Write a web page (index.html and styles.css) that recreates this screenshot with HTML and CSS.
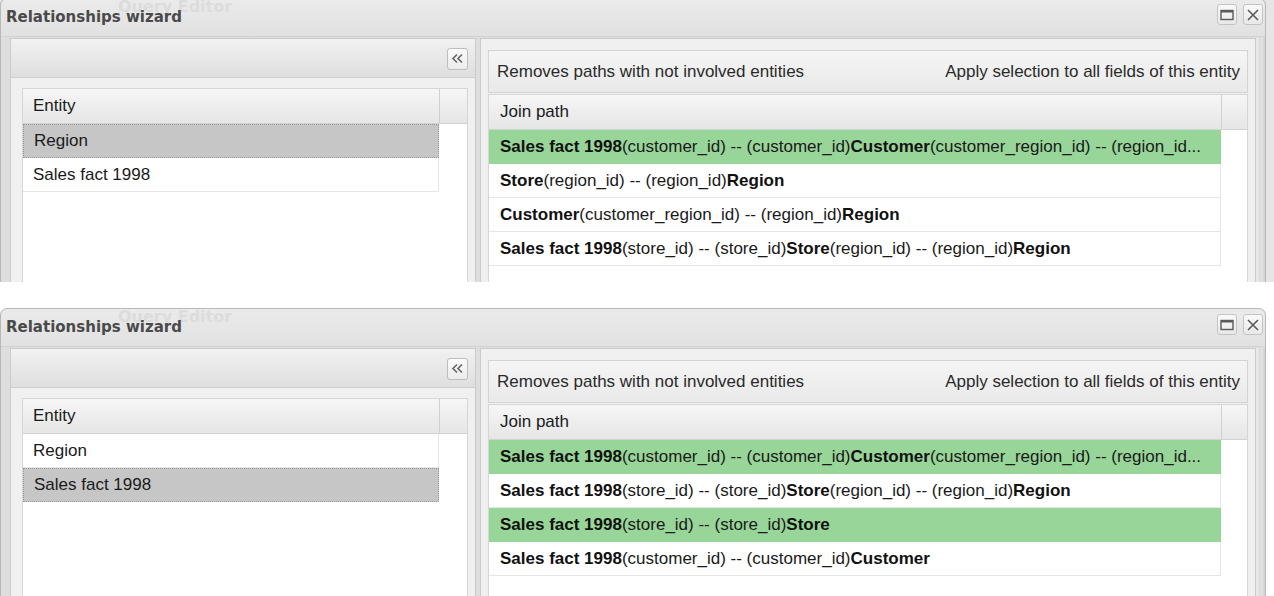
FILE: index.html
```html
<!DOCTYPE html>
<html>
<head>
<meta charset="utf-8">
<title>Relationships wizard</title>
<link rel="stylesheet" href="styles.css">
</head>
<body>
<div class="shot shot-a">
  <div class="window">
    <div class="titlebar">
      <span class="ghost ghost-title">Query Editor</span>
      <span class="title">Relationships wizard</span>
      <div class="tools">
        <span class="tbtn"><svg width="14" height="12" viewBox="0 0 14 12"><rect x="1" y="1.5" width="12" height="9" fill="none" stroke="#5a5a5a" stroke-width="1.4"/><rect x="1" y="1" width="12" height="2.5" fill="#5a5a5a"/></svg></span>
        <span class="tbtn"><svg width="14" height="14" viewBox="0 0 14 14"><path d="M2 2 L12 12 M12 2 L2 12" stroke="#5a5a5a" stroke-width="1.6" fill="none"/></svg></span>
      </div>
    </div>
    <div class="body">
      <div class="lpanel">
        <div class="lhead">
          <span class="collapse"><svg width="13" height="11" viewBox="0 0 13 11"><path d="M6 1.5 L2 5.5 L6 9.5 M11 1.5 L7 5.5 L11 9.5" stroke="#6a6a6a" stroke-width="1.7" fill="none"/></svg></span>
        </div>
        <div class="lcontent">
          <div class="grid lgrid">
            <div class="ghead"><div class="gcol">Entity</div><div class="gspacer"></div></div>
            <div class="grow sel">Region</div>
            <div class="grow">Sales fact 1998</div>
          </div>
        </div>
      </div>
      <div class="rpanel">
        <div class="rtool">
          <span>Removes paths with not involved entities</span>
          <span>Apply selection to all fields of this entity</span>
        </div>
        <div class="grid rgrid">
          <div class="ghead"><div class="gcol">Join path</div><div class="gspacer"></div></div>
          <div class="grow green"><b>Sales fact 1998</b>(customer_id) -- (customer_id)<b>Customer</b>(customer_region_id) -- (region_id...</div>
          <div class="grow"><b>Store</b>(region_id) -- (region_id)<b>Region</b></div>
          <div class="grow"><b>Customer</b>(customer_region_id) -- (region_id)<b>Region</b></div>
          <div class="grow"><b>Sales fact 1998</b>(store_id) -- (store_id)<b>Store</b>(region_id) -- (region_id)<b>Region</b></div>
        </div>
      </div>
      <div class="redge"></div>
    </div>
  </div>
</div>

<div class="shot shot-b">
  <div class="window">
    <div class="titlebar">
      <span class="ghost ghost-title">Query Editor</span>
      <span class="title">Relationships wizard</span>
      <div class="tools">
        <span class="tbtn"><svg width="14" height="12" viewBox="0 0 14 12"><rect x="1" y="1.5" width="12" height="9" fill="none" stroke="#5a5a5a" stroke-width="1.4"/><rect x="1" y="1" width="12" height="2.5" fill="#5a5a5a"/></svg></span>
        <span class="tbtn"><svg width="14" height="14" viewBox="0 0 14 14"><path d="M2 2 L12 12 M12 2 L2 12" stroke="#5a5a5a" stroke-width="1.6" fill="none"/></svg></span>
      </div>
    </div>
    <div class="body">
      <div class="lpanel">
        <div class="lhead">
          <span class="collapse"><svg width="13" height="11" viewBox="0 0 13 11"><path d="M6 1.5 L2 5.5 L6 9.5 M11 1.5 L7 5.5 L11 9.5" stroke="#6a6a6a" stroke-width="1.7" fill="none"/></svg></span>
        </div>
        <div class="lcontent">
          <div class="grid lgrid">
            <div class="ghead"><div class="gcol">Entity</div><div class="gspacer"></div></div>
            <div class="grow">Region</div>
            <div class="grow sel">Sales fact 1998</div>
          </div>
        </div>
      </div>
      <div class="rpanel">
        <div class="rtool">
          <span>Removes paths with not involved entities</span>
          <span>Apply selection to all fields of this entity</span>
        </div>
        <div class="grid rgrid">
          <div class="ghead"><div class="gcol">Join path</div><div class="gspacer"></div></div>
          <div class="grow green"><b>Sales fact 1998</b>(customer_id) -- (customer_id)<b>Customer</b>(customer_region_id) -- (region_id...</div>
          <div class="grow"><b>Sales fact 1998</b>(store_id) -- (store_id)<b>Store</b>(region_id) -- (region_id)<b>Region</b></div>
          <div class="grow green"><b>Sales fact 1998</b>(store_id) -- (store_id)<b>Store</b></div>
          <div class="grow"><b>Sales fact 1998</b>(customer_id) -- (customer_id)<b>Customer</b></div>
        </div>
      </div>
      <div class="redge"></div>
    </div>
  </div>
</div>
</body>
</html>
```

FILE: styles.css
```css
html, body {
  margin: 0;
  padding: 0;
  background: #ffffff;
}

body {
  width: 1274px;
  font-family: "Liberation Sans", Arial, sans-serif;
  font-size: 17px;
  color: #1a1a1a;
}

.shot {
  overflow: hidden;
  background: #e6e6e6;
}

.shot-a {
  height: 282px;
}

.shot-a .window {
  margin-top: -2px;
}

.shot-b {
  margin-top: 26px;
  height: 288px;
  background: #ffffff;
}

.window {
  position: relative;
  width: 1266px;
  height: 320px;
  background: #dcdcdc;
  border: 1px solid #b8b8b8;
  border-radius: 7px 7px 0 0;
  box-sizing: border-box;
}

.titlebar {
  position: relative;
  height: 37px;
  display: flex;
  align-items: center;
  background: linear-gradient(#ebebeb, #e1e1e1);
  border-radius: 7px 7px 0 0;
  border-bottom: 1px solid #d2d2d2;
}

.ghost {
  position: absolute;
  font-family: "DejaVu Sans", Verdana, sans-serif;
  font-weight: bold;
  color: #dcdcdc;
}

.ghost-title {
  left: 117px;
  top: 0px;
  font-size: 16px;
  line-height: 16px;
}

.title {
  position: relative;
  margin-left: 5px;
  margin-top: -1px;
  font-family: "DejaVu Sans", Verdana, sans-serif;
  font-weight: bold;
  font-size: 15px;
  color: #4a4a4a;
}

.tools {
  margin-left: auto;
  margin-right: 2px;
  margin-top: -6px;
  display: flex;
  gap: 6px;
}

.tbtn {
  width: 18px;
  height: 19px;
  display: flex;
  align-items: center;
  justify-content: center;
  background: linear-gradient(#fafafa, #e8e8e8);
  border: 1px solid #c4c4c4;
  border-radius: 3px;
}

.body {
  display: flex;
  padding: 1px 0 0 9px;
  height: 280px;
  background: #dedede;
}

.lpanel {
  width: 466px;
  box-sizing: border-box;
  border: 1px solid #cbcbcb;
  background: #eeeeee;
  display: flex;
  flex-direction: column;
}

.lhead {
  flex-shrink: 0;
  height: 39px;
  box-sizing: border-box;
  display: flex;
  align-items: center;
  justify-content: flex-end;
  padding-right: 7px;
  background: linear-gradient(#f1f1f1, #dedede);
  border-bottom: 1px solid #d0d0d0;
}

.collapse {
  width: 19px;
  height: 20px;
  display: flex;
  align-items: center;
  justify-content: center;
  background: linear-gradient(#fbfbfb, #ececec);
  border: 1px solid #bdbdbd;
  border-radius: 3px;
  margin-top: 1px;
}

.lcontent {
  flex: 1;
  padding: 10px 7px 0 11px;
  background: #f0f0f0;
}

.rpanel {
  margin-left: 4px;
  width: 776px;
  box-sizing: border-box;
  border: 1px solid #cbcbcb;
  background: #f0f0f0;
  padding: 11px 7px 0 7px;
}

.redge {
  flex: 1;
  border-left: 3px solid #e8e8e8;
  background: linear-gradient(90deg, #d6d6d6, #e4e4e4 40%, #d2d2d2);
}

.rtool {
  height: 43px;
  box-sizing: border-box;
  display: flex;
  align-items: center;
  justify-content: space-between;
  padding: 0 7px 0 8px;
  border: 1px solid #d4d4d4;
  background: linear-gradient(#f5f5f5, #e9e9e9);
  color: #2a2a2a;
}

.grid {
  background: #ffffff;
  border: 1px solid #d6d6d6;
  height: 400px;
}

.rgrid {
  margin-top: 1px;
}

.ghead {
  display: flex;
  height: 35px;
  box-sizing: border-box;
  background: linear-gradient(#f6f6f6, #e6e6e6);
  border-bottom: 1px solid #d2d2d2;
}

.gcol {
  flex: 1;
  display: flex;
  align-items: center;
  padding-left: 10px;
  border-right: 1px solid #d0d0d0;
}

.rgrid .gcol {
  padding-left: 11px;
}

.lgrid .gspacer {
  width: 27px;
}

.rgrid .gspacer {
  width: 25px;
}

.grow {
  height: 34px;
  box-sizing: border-box;
  display: flex;
  align-items: center;
  padding-left: 10px;
  border-bottom: 1px solid #e6e6e6;
  border-right: 1px solid #e6e6e6;
  white-space: nowrap;
  overflow: hidden;
  background: #ffffff;
}

.lgrid .grow {
  margin-right: 28px;
}

.rgrid .grow {
  margin-right: 26px;
  padding-left: 11px;
}

.grow.sel {
  background: #c6c6c6;
  border: 1px dotted #9a9a9a;
}

.grow.green {
  background: #98d598;
  border-color: #98d598;
}

.grow b {
  font-weight: bold;
  color: #111;
}
```
